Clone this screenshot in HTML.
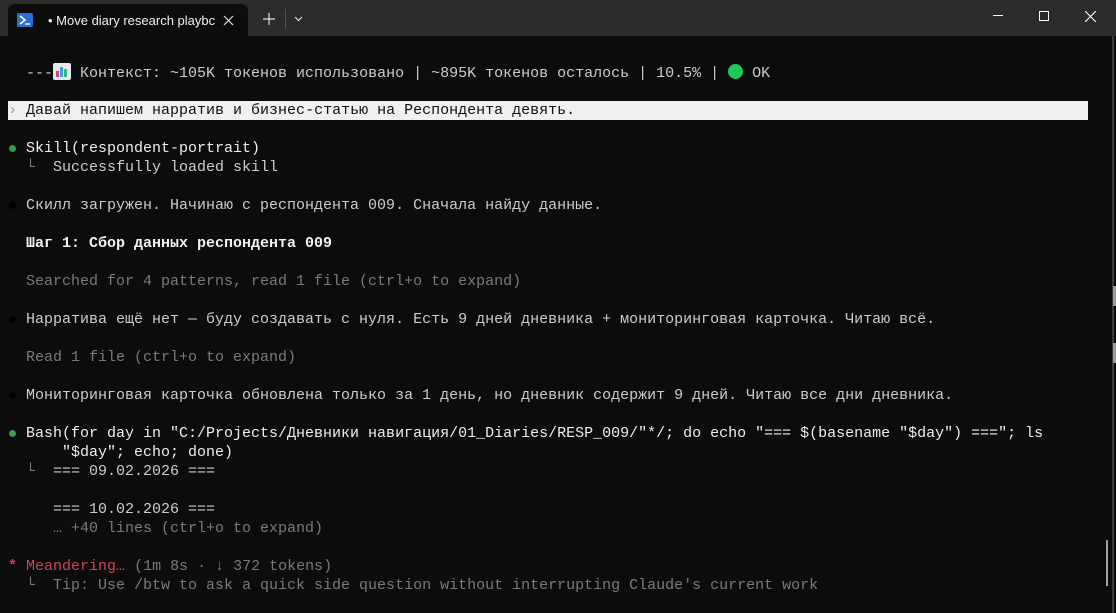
<!DOCTYPE html>
<html><head><meta charset="utf-8"><style>
*{margin:0;padding:0;box-sizing:border-box}
body{width:1116px;height:613px;background:#0c0c0c;overflow:hidden;position:relative;font-family:"Liberation Mono","DejaVu Sans Mono",monospace;font-size:15px;color:#cccccc}
.tb{position:absolute;left:0;top:0;width:1116px;height:36px;background:#2b2b2b}
.tab{position:absolute;left:8px;top:4px;width:240px;height:32px;background:#0c0c0c;border-radius:7px 7px 0 0}
.tt{position:absolute;left:40px;top:9px;width:168px;overflow:hidden;font-family:"Liberation Sans",sans-serif;font-size:13px;color:#f0f0f0;white-space:nowrap}
.l{position:absolute;left:8px;height:19px;line-height:19px;white-space:pre}
.g{color:#7a7a7a}.w{color:#f2f2f2;font-weight:bold}.r{color:#c84656}
.dot{position:absolute;width:7px;height:7px;border-radius:50%;left:9px}
</style></head><body>
<div class="tb">
 <div class="tab">
  <svg style="position:absolute;left:9px;top:9px" width="16" height="14" viewBox="0 0 16 14"><rect width="16" height="14" rx="2" fill="#2a6fd6"/><path d="M3 3l5 4-5 4" stroke="#fff" stroke-width="1.6" fill="none"/><path d="M8 11h5" stroke="#fff" stroke-width="1.4"/></svg>
  <div class="tt">• Move diary research playbc</div>
  <svg style="position:absolute;left:215px;top:11px" width="11" height="11"><path d="M1 1l9 9M10 1l-9 9" stroke="#e0e0e0" stroke-width="1.2"/></svg>
 </div>
 <svg style="position:absolute;left:263px;top:13px" width="12" height="12"><path d="M6 0v12M0 6h12" stroke="#e0e0e0" stroke-width="1.2"/></svg>
 <div style="position:absolute;left:285px;top:9px;width:1px;height:20px;background:#555"></div>
 <svg style="position:absolute;left:294px;top:16px" width="9" height="6"><path d="M1 1l3.5 3.5L8 1" stroke="#e0e0e0" stroke-width="1.2" fill="none"/></svg>
 <div style="position:absolute;left:993px;top:15px;width:10px;height:1px;background:#fff"></div>
 <div style="position:absolute;left:1039px;top:11px;width:10px;height:10px;border:1px solid #fff"></div>
 <svg style="position:absolute;left:1085px;top:11px" width="11" height="11"><path d="M0 0l11 11M11 0L0 11" stroke="#fff" stroke-width="1.1"/></svg>
</div>
<div style="position:absolute;left:1112px;top:36px;width:2px;height:577px;background:#3a3a3a"></div>
<div style="position:absolute;left:1113px;top:286px;width:3px;height:20px;background:#9a9a9a"></div>
<div style="position:absolute;left:1113px;top:343px;width:3px;height:20px;background:#9a9a9a"></div>
<div style="position:absolute;left:1106px;top:540px;width:2px;height:46px;background:#a0a0a0"></div>

<div class="l" style="top:63px">  ---<span style="display:inline-block;width:18px;height:17px;vertical-align:-3px;background:#e8e8ee;border-radius:2px;position:relative"><span style="position:absolute;left:3px;bottom:3px;width:3px;height:6px;background:#e0407a"></span><span style="position:absolute;left:7px;bottom:3px;width:3px;height:10px;background:#3fa0e0"></span><span style="position:absolute;left:11px;bottom:3px;width:3px;height:8px;background:#30c070"></span></span> Контекст: ~105K токенов использовано | ~895K токенов осталось | 10.5% | <span style="display:inline-block;width:15px;height:15px;border-radius:50%;background:#22c55e;vertical-align:-2px"></span> OK</div>
<div style="position:absolute;left:8px;top:101px;width:1080px;height:19px;background:#f0f0f0"></div>
<div class="l" style="top:101px;color:#111"><span style="color:#999">›</span> Давай напишем нарратив и бизнес-статью на Респондента девять.</div>

<div class="dot" style="top:145px;background:#3c9a4a"></div>
<div class="l" style="top:139px;color:#eee">  Skill(respondent-portrait)</div>
<div class="l" style="top:158px"><span class="g">  └</span>  Successfully loaded skill</div>

<div class="dot" style="top:202px;background:#000"></div>
<div class="l" style="top:196px">  Скилл загружен. Начинаю с респондента 009. Сначала найду данные.</div>
<div class="l w" style="top:234px">  Шаг 1: Сбор данных респондента 009</div>
<div class="l g" style="top:272px">  Searched for 4 patterns, read 1 file (ctrl+o to expand)</div>

<div class="dot" style="top:316px;background:#000"></div>
<div class="l" style="top:310px">  Нарратива ещё нет — буду создавать с нуля. Есть 9 дней дневника + мониторинговая карточка. Читаю всё.</div>
<div class="l g" style="top:348px">  Read 1 file (ctrl+o to expand)</div>

<div class="dot" style="top:392px;background:#000"></div>
<div class="l" style="top:386px">  Мониторинговая карточка обновлена только за 1 день, но дневник содержит 9 дней. Читаю все дни дневника.</div>

<div class="dot" style="top:430px;background:#3c9a4a"></div>
<div class="l" style="top:424px;color:#eee">  Bash(for day in "C:/Projects/Дневники навигация/01_Diaries/RESP_009/"*/; do echo "=== $(basename "$day") ==="; ls</div>
<div class="l" style="top:443px;color:#eee">      "$day"; echo; done)</div>
<div class="l" style="top:462px"><span class="g">  └</span>  === 09.02.2026 ===</div>
<div class="l" style="top:500px">     === 10.02.2026 ===</div>
<div class="l g" style="top:519px">     … +40 lines (ctrl+o to expand)</div>

<div class="l" style="top:557px"><span class="r" style="font-weight:bold">*</span> <span class="r">Meandering…</span> <span class="g">(1m 8s · ↓ 372 tokens)</span></div>
<div class="l g" style="top:576px">  └  Tip: Use /btw to ask a quick side question without interrupting Claude's current work</div>
</body></html>
